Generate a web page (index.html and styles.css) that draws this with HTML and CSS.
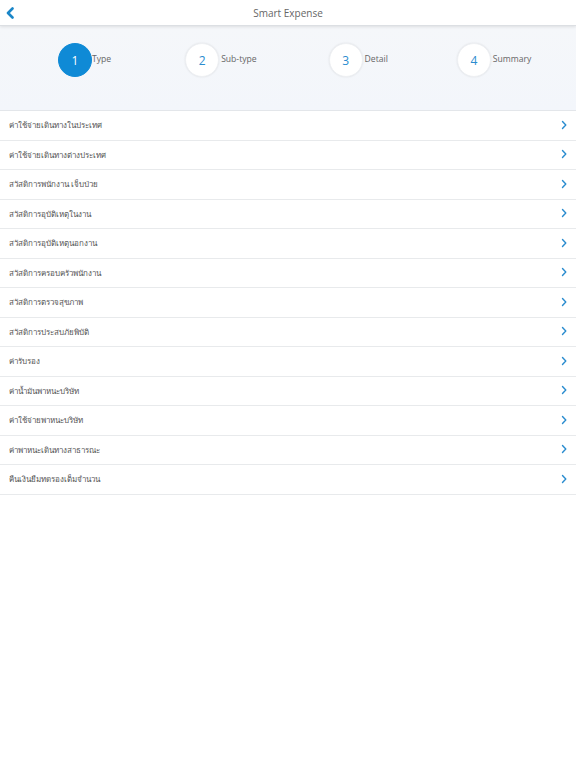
FILE: index.html
```html
<!DOCTYPE html>
<html lang="th">
<head>
<meta charset="utf-8">
<title>Smart Expense</title>
<link rel="stylesheet" href="styles.css">
</head>
<body>
<header class="topbar">
  <span class="back">
    <svg width="10" height="12" viewBox="0 0 10 12"><path d="M7.5 1.5 L3 6 L7.5 10.5" fill="none" stroke="#1a86c8" stroke-width="2.6" stroke-linecap="round" stroke-linejoin="round"/></svg>
  </span>
  <span class="title">Smart Expense</span>
</header>
<section class="stepper">
  <div class="step active"><span class="circle">1</span><span class="label">Type</span></div>
  <div class="step"><span class="circle">2</span><span class="label">Sub-type</span></div>
  <div class="step"><span class="circle">3</span><span class="label">Detail</span></div>
  <div class="step"><span class="circle">4</span><span class="label">Summary</span></div>
</section>
<ul class="list">
  <li class="row"><span>ค่าใช้จ่ายเดินทางในประเทศ</span><svg class="chev" width="8" height="10" viewBox="0 0 8 10"><path d="M2.5 1.5 L5.8 5 L2.5 8.5" fill="none" stroke="#2a8ccf" stroke-width="1.4" stroke-linecap="round" stroke-linejoin="round"/></svg></li>
  <li class="row"><span>ค่าใช้จ่ายเดินทางต่างประเทศ</span><svg class="chev" width="8" height="10" viewBox="0 0 8 10"><path d="M2.5 1.5 L5.8 5 L2.5 8.5" fill="none" stroke="#2a8ccf" stroke-width="1.4" stroke-linecap="round" stroke-linejoin="round"/></svg></li>
  <li class="row"><span>สวัสดิการพนักงาน เจ็บป่วย</span><svg class="chev" width="8" height="10" viewBox="0 0 8 10"><path d="M2.5 1.5 L5.8 5 L2.5 8.5" fill="none" stroke="#2a8ccf" stroke-width="1.4" stroke-linecap="round" stroke-linejoin="round"/></svg></li>
  <li class="row"><span>สวัสดิการอุบัติเหตุในงาน</span><svg class="chev" width="8" height="10" viewBox="0 0 8 10"><path d="M2.5 1.5 L5.8 5 L2.5 8.5" fill="none" stroke="#2a8ccf" stroke-width="1.4" stroke-linecap="round" stroke-linejoin="round"/></svg></li>
  <li class="row"><span>สวัสดิการอุบัติเหตุนอกงาน</span><svg class="chev" width="8" height="10" viewBox="0 0 8 10"><path d="M2.5 1.5 L5.8 5 L2.5 8.5" fill="none" stroke="#2a8ccf" stroke-width="1.4" stroke-linecap="round" stroke-linejoin="round"/></svg></li>
  <li class="row"><span>สวัสดิการครอบครัวพนักงาน</span><svg class="chev" width="8" height="10" viewBox="0 0 8 10"><path d="M2.5 1.5 L5.8 5 L2.5 8.5" fill="none" stroke="#2a8ccf" stroke-width="1.4" stroke-linecap="round" stroke-linejoin="round"/></svg></li>
  <li class="row"><span>สวัสดิการตรวจสุขภาพ</span><svg class="chev" width="8" height="10" viewBox="0 0 8 10"><path d="M2.5 1.5 L5.8 5 L2.5 8.5" fill="none" stroke="#2a8ccf" stroke-width="1.4" stroke-linecap="round" stroke-linejoin="round"/></svg></li>
  <li class="row"><span>สวัสดิการประสบภัยพิบัติ</span><svg class="chev" width="8" height="10" viewBox="0 0 8 10"><path d="M2.5 1.5 L5.8 5 L2.5 8.5" fill="none" stroke="#2a8ccf" stroke-width="1.4" stroke-linecap="round" stroke-linejoin="round"/></svg></li>
  <li class="row"><span>ค่ารับรอง</span><svg class="chev" width="8" height="10" viewBox="0 0 8 10"><path d="M2.5 1.5 L5.8 5 L2.5 8.5" fill="none" stroke="#2a8ccf" stroke-width="1.4" stroke-linecap="round" stroke-linejoin="round"/></svg></li>
  <li class="row"><span>ค่าน้ำมันพาหนะบริษัท</span><svg class="chev" width="8" height="10" viewBox="0 0 8 10"><path d="M2.5 1.5 L5.8 5 L2.5 8.5" fill="none" stroke="#2a8ccf" stroke-width="1.4" stroke-linecap="round" stroke-linejoin="round"/></svg></li>
  <li class="row"><span>ค่าใช้จ่ายพาหนะบริษัท</span><svg class="chev" width="8" height="10" viewBox="0 0 8 10"><path d="M2.5 1.5 L5.8 5 L2.5 8.5" fill="none" stroke="#2a8ccf" stroke-width="1.4" stroke-linecap="round" stroke-linejoin="round"/></svg></li>
  <li class="row"><span>ค่าพาหนะเดินทางสาธารณะ</span><svg class="chev" width="8" height="10" viewBox="0 0 8 10"><path d="M2.5 1.5 L5.8 5 L2.5 8.5" fill="none" stroke="#2a8ccf" stroke-width="1.4" stroke-linecap="round" stroke-linejoin="round"/></svg></li>
  <li class="row"><span>คืนเงินยืมทดรองเต็มจำนวน</span><svg class="chev" width="8" height="10" viewBox="0 0 8 10"><path d="M2.5 1.5 L5.8 5 L2.5 8.5" fill="none" stroke="#2a8ccf" stroke-width="1.4" stroke-linecap="round" stroke-linejoin="round"/></svg></li>
</ul>
</body>
</html>
```
FILE: styles.css
```css
* { box-sizing: border-box; }
html, body { margin: 0; padding: 0; background: #ffffff; }
body {
  font-family: "Open Sans", "Noto Sans", "DejaVu Sans", sans-serif;
  color: #555;
  width: 576px;
}
.topbar {
  height: 26px;
  display: flex;
  align-items: center;
  justify-content: center;
  position: relative;
  background: #fff;
  border-bottom: 1px solid #dcdfe3;
  box-shadow: 0 1px 3px rgba(0,0,0,0.10);
  z-index: 2;
}
.back {
  position: absolute;
  left: 5px;
  top: 7px;
  display: flex;
}
.title {
  font-size: 10px;
  color: #666;
}
.stepper {
  height: 85px;
  background: linear-gradient(#f5f7fa, #f3f6fb);
  border-bottom: 1px solid #e3e6ea;
  display: flex;
  align-items: flex-start;
  padding: 17px 0 0 58px;
}
.step {
  display: flex;
  align-items: center;
}
.step:nth-child(2) { margin-left: 74px; }
.step:nth-child(3) { margin-left: 72px; }
.step:nth-child(4) { margin-left: 69px; }
.circle {
  width: 34px;
  height: 34px;
  border-radius: 50%;
  background: #fff;
  color: #2a8ccf;
  display: flex;
  align-items: center;
  justify-content: center;
  font-size: 12px;
  box-shadow: 0 0 2px rgba(0,0,0,0.10);
  border: 1px solid #eef0f3;
}
.step.active .circle {
  background: #0f8ad6;
  color: #fff;
  border-color: #0f8ad6;
  box-shadow: none;
}
.label {
  font-size: 8.6px;
  color: #666;
  margin-left: 0;
  margin-top: -2px;
}
.step:nth-child(2) .label,
.step:nth-child(3) .label,
.step:nth-child(4) .label { margin-left: 2px; }
.list {
  list-style: none;
  margin: 0;
  padding: 0;
}
.row {
  height: 29.5px;
  display: flex;
  align-items: center;
  justify-content: space-between;
  padding: 1px 8px 0 9px;
  border-bottom: 1px solid #e8eaec;
  font-size: 8px;
  color: #555;
}
.chev { display: block; margin-top: -2px; }
```
